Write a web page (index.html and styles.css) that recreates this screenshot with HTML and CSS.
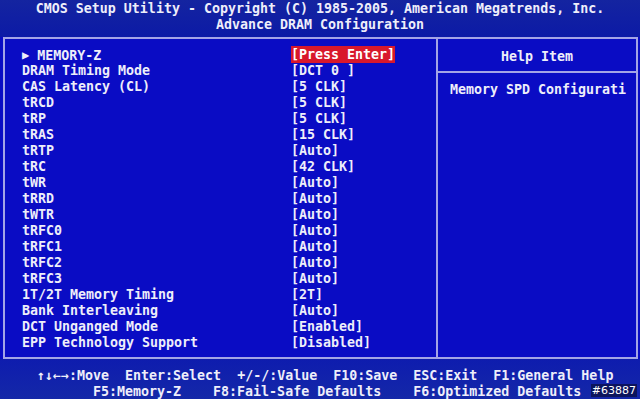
FILE: index.html
```html
<!DOCTYPE html>
<html lang="en">
<head>
    <meta charset="UTF-8">
    <meta name="viewport" content="width=device-width, initial-scale=1.0">
    <title>Advance DRAM Configuration</title>
    <link rel="stylesheet" href="styles.css">
</head>
<body>

    <div class="screen">

        <!-- Title -->
        <div class="title">
            <div class="title-line">CMOS Setup Utility - Copyright (C) 1985-2005, American Megatrends, Inc.</div>
            <div class="title-line">Advance DRAM Configuration</div>
        </div>

        <!-- Main frame -->
        <div class="frame">
            <div class="settings">
                <div class="row"><span class="label"><span class="arrow">&#9654;</span> MEMORY-Z</span><span class="value"><span class="selected">[Press Enter]</span></span></div>
                <div class="row"><span class="label">DRAM Timing Mode</span><span class="value">[DCT 0 ]</span></div>
                <div class="row"><span class="label">CAS Latency (CL)</span><span class="value">[5 CLK]</span></div>
                <div class="row"><span class="label">tRCD</span><span class="value">[5 CLK]</span></div>
                <div class="row"><span class="label">tRP</span><span class="value">[5 CLK]</span></div>
                <div class="row"><span class="label">tRAS</span><span class="value">[15 CLK]</span></div>
                <div class="row"><span class="label">tRTP</span><span class="value">[Auto]</span></div>
                <div class="row"><span class="label">tRC</span><span class="value">[42 CLK]</span></div>
                <div class="row"><span class="label">tWR</span><span class="value">[Auto]</span></div>
                <div class="row"><span class="label">tRRD</span><span class="value">[Auto]</span></div>
                <div class="row"><span class="label">tWTR</span><span class="value">[Auto]</span></div>
                <div class="row"><span class="label">tRFC0</span><span class="value">[Auto]</span></div>
                <div class="row"><span class="label">tRFC1</span><span class="value">[Auto]</span></div>
                <div class="row"><span class="label">tRFC2</span><span class="value">[Auto]</span></div>
                <div class="row"><span class="label">tRFC3</span><span class="value">[Auto]</span></div>
                <div class="row"><span class="label">1T/2T Memory Timing</span><span class="value">[2T]</span></div>
                <div class="row"><span class="label">Bank Interleaving</span><span class="value">[Auto]</span></div>
                <div class="row"><span class="label">DCT Unganged Mode</span><span class="value">[Enabled]</span></div>
                <div class="row"><span class="label">EPP Technology Support</span><span class="value">[Disabled]</span></div>
            </div>

            <div class="help">
                <div class="help-head">Help Item</div>
                <div class="help-body">Memory SPD Configurati</div>
            </div>
        </div>

        <!-- Key legend -->
        <div class="keys">
            <div class="keys-line first">&#8593;&#8595;&#8592;&#8594;:Move  Enter:Select  +/-/:Value  F10:Save  ESC:Exit  F1:General Help</div>
            <div class="keys-line second">F5:Memory-Z    F8:Fail-Safe Defaults    F6:Optimized Defaults</div>
        </div>

        <span class="stamp">#63887</span>
    </div>

</body>
</html>
```

FILE: styles.css
```css
body {
    margin: 0;
    padding: 0;
    background-color: #0a0cc4;
    font-family: "DejaVu Sans Mono", "Liberation Mono", monospace;
    font-size: 13.3px;
    font-weight: bold;
    color: #eeeefa;
}

.screen {
    position: relative;
    width: 640px;
    height: 399px;
    overflow: hidden;
    background-color: #0a0cc4;
}

/* Title bar */
.title {
    height: 37px;
    box-sizing: border-box;
    padding-top: 1px;
    background: linear-gradient(to bottom, #1424a0, #0c1aa6);
    text-align: center;
}

.title-line {
    height: 16px;
    line-height: 16px;
    white-space: pre;
}

/* Main frame */
.frame {
    display: grid;
    grid-template-columns: 431px 1fr;
    width: 635px;
    height: 322px;
    box-sizing: border-box;
    margin-left: 3px;
    border: 2px solid #a4a4e6;
}

.settings {
    padding-top: 8px;
    padding-left: 17px;
}

.row {
    display: grid;
    grid-template-columns: 269px auto;
    height: 16px;
    line-height: 16px;
    white-space: pre;
}

.arrow {
    font-size: 12px;
    vertical-align: 1px;
}

.selected {
    background-color: #d8182c;
    color: #ffffff;
    padding: 1px 0;
}

/* Help pane */
.help {
    border-left: 2px solid #a4a4e6;
}

.help-head {
    height: 34px;
    box-sizing: border-box;
    padding-top: 10px;
    border-bottom: 2px solid #a4a4e6;
    text-align: center;
    line-height: 16px;
}

.help-body {
    padding-top: 9px;
    padding-left: 12px;
    line-height: 16px;
    white-space: pre;
}

/* Key legend */
.keys {
    height: 40px;
    box-sizing: border-box;
    padding-top: 9px;
    background: linear-gradient(to bottom, #0e1cae, #1428a8);
}

.keys-line {
    height: 16px;
    line-height: 16px;
    white-space: pre;
}

.keys-line.first {
    padding-left: 37px;
}

.keys-line.second {
    padding-left: 93px;
}

/* Image number stamp */
.stamp {
    position: absolute;
    right: 3px;
    bottom: 2px;
    padding: 0 1px;
    background-color: rgba(10, 14, 60, 0.7);
    font-family: "DejaVu Sans", sans-serif;
    font-size: 11px;
    font-weight: normal;
    line-height: 13px;
    color: #ffffff;
}
```
